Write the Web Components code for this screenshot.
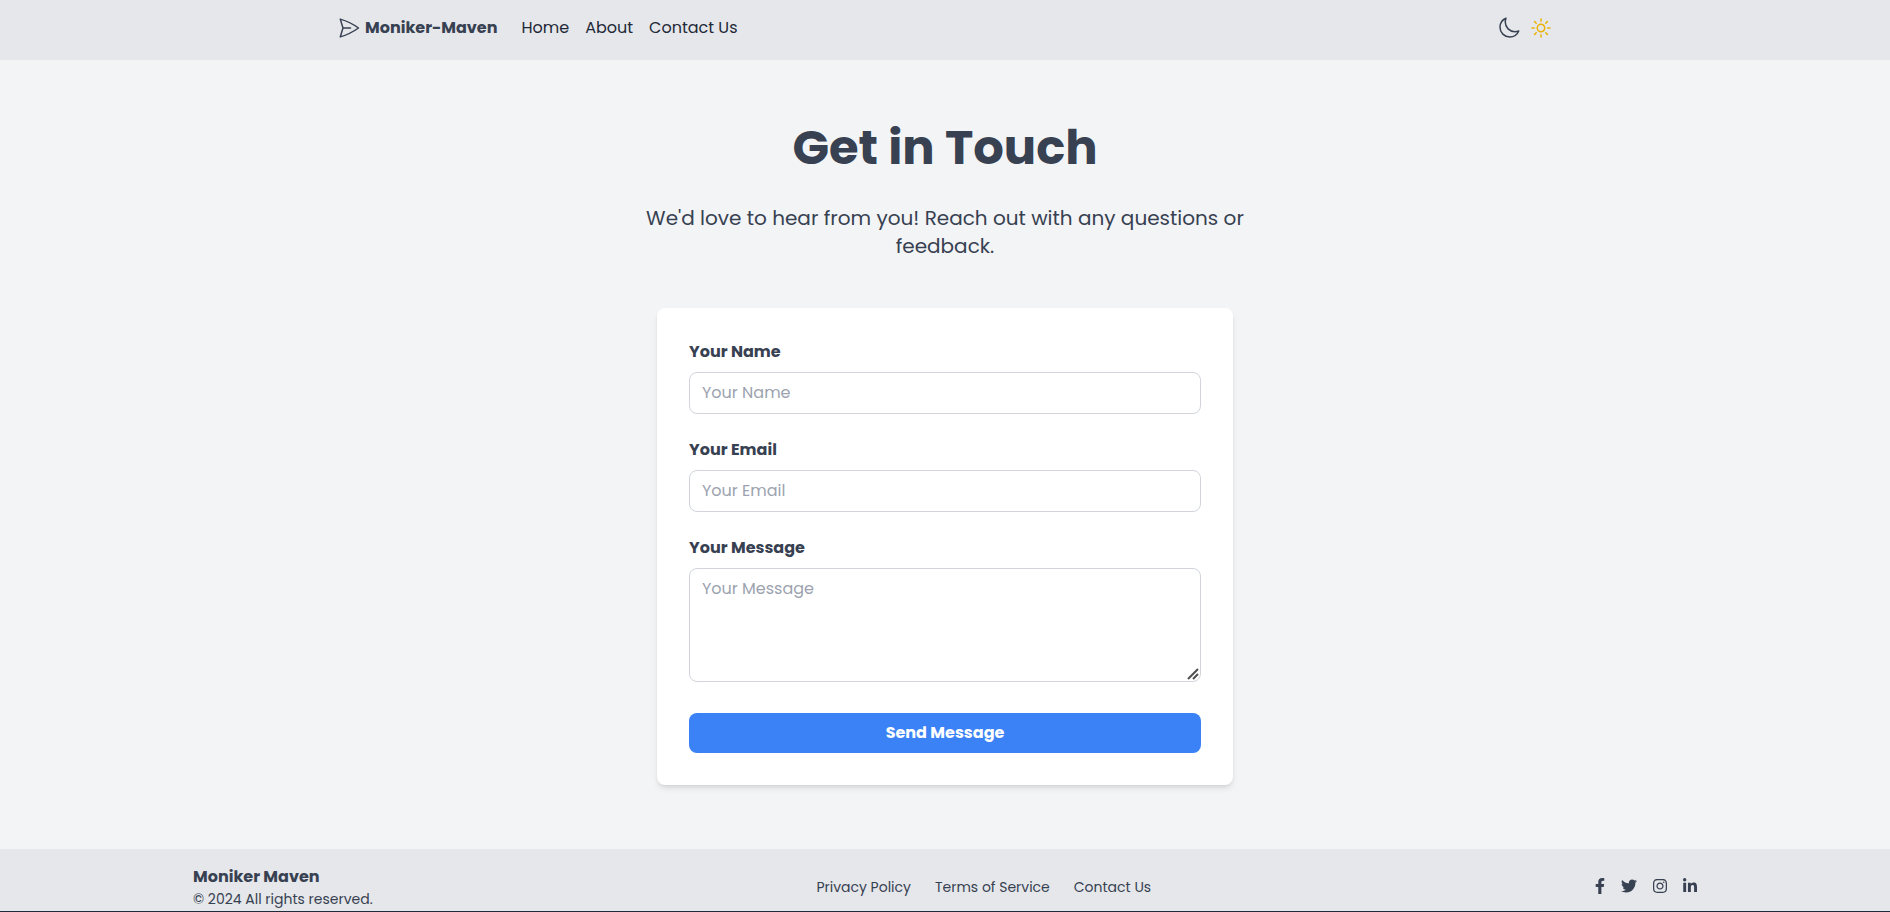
<!DOCTYPE html>
<html lang="en">
<head>
<meta charset="utf-8">
<meta name="viewport" content="width=device-width, initial-scale=1">
<title>Moniker Maven – Contact</title>
<style>
:root {
  --ink: #374151;
  --bar: #e5e7eb;
  --page: #f3f4f6;
  --line: #d1d5db;
  --accent: #3b82f6;
}
body {
  margin: 0;
  background: #1f2937;
  color: var(--ink);
  font-family: Poppins, Inter, "Open Sans", sans-serif;
  font-size: 16px;
  line-height: 24px;
}
</style>
</head>
<body>
<contact-page></contact-page>

<script>
const define = (name, html, setup) => {
  const template = document.createElement('template');
  template.innerHTML = `<style>*{box-sizing:border-box} svg{display:block}</style>${html}`;
  customElements.define(name, class extends HTMLElement {
    constructor() {
      super();
      this.attachShadow({ mode: 'open' }).append(template.content.cloneNode(true));
    }
    connectedCallback() { if (setup) setup(this, this.shadowRoot); }
  });
};

define('nav-link', `
<style>
:host { display: block; }
a { color: #1f2937; text-decoration: none; }
</style>
<a><slot></slot></a>`, (el, root) => {
  root.querySelector('a').href = el.getAttribute('href') || '#';
});

define('site-header', `
<style>
:host { display: block; background: var(--bar); }
.inner { max-width: 1280px; margin: 0 auto; padding: 16px 32px 20px; display: flex; align-items: center; justify-content: space-between; }
nav, .brand, .theme { display: flex; align-items: center; }
.brand { font-weight: 700; color: var(--ink); text-decoration: none; margin-right: 8px; gap: 4px; }
nav { gap: 16px; }
.theme { gap: 8px; }
button { display: block; border: 0; padding: 0; background: none; color: var(--ink); }
button.sun { color: #eab308; }
</style>
<header class="inner">
  <nav>
    <a class="brand" href="#">
      <svg width="24" height="24" viewBox="0 0 24 24" fill="none" stroke="currentColor" stroke-width="1.5" stroke-linecap="round" stroke-linejoin="round" aria-hidden="true"><path d="M6 12 3.269 3.125A59.769 59.769 0 0 1 21.485 12 59.768 59.768 0 0 1 3.27 20.875L5.999 12Zm0 0h7.5"/></svg>
      <span>Moniker-Maven</span>
    </a>
    <nav-link href="#home">Home</nav-link>
    <nav-link href="#about">About</nav-link>
    <nav-link href="#contact">Contact Us</nav-link>
  </nav>
  <div class="theme">
    <button type="button" aria-label="Dark mode"><svg width="24" height="24" viewBox="0 0 24 24" fill="none" stroke="currentColor" stroke-width="1.5" stroke-linecap="round" stroke-linejoin="round"><path d="M21.752 15.002A9.72 9.72 0 0 1 18 15.75c-5.385 0-9.75-4.365-9.75-9.75 0-1.33.266-2.597.748-3.752A9.753 9.753 0 0 0 3 11.25C3 16.635 7.365 21 12.75 21a9.753 9.753 0 0 0 9.002-5.998Z"/></svg></button>
    <button type="button" class="sun" aria-label="Light mode"><svg width="24" height="24" viewBox="0 0 24 24" fill="none" stroke="currentColor" stroke-width="1.5" stroke-linecap="round" stroke-linejoin="round"><path d="M12 3v2.25m6.364.386-1.591 1.591M21 12h-2.25m-.386 6.364-1.591-1.591M12 18.75V21m-4.773-4.227-1.591 1.591M5.25 12H3m4.227-4.773L5.636 5.636M15.75 12a3.75 3.75 0 1 1-7.5 0 3.75 3.75 0 0 1 7.5 0Z"/></svg></button>
  </div>
</header>`);

define('page-intro', `
<style>
:host { display: block; text-align: center; max-width: 672px; margin: 0 auto 48px; padding: 0 16px; }
h1 { margin: 0 0 32px; font-size: 48px; line-height: 48px; font-weight: 700; }
p { margin: 0; font-size: 20px; line-height: 28px; }
</style>
<h1><slot name="title"></slot></h1>
<p><slot></slot></p>`);

define('form-field', `
<style>
:host { display: block; }
label { display: block; margin-bottom: 8px; font-weight: 700; }
input, textarea { display: block; width: 100%; margin: 0; padding: 8px 12px; border: 1px solid var(--line); border-radius: 8px; background: #fff; color: var(--ink); font: inherit; }
input { height: 42px; padding: 7px 12px 9px; }
::placeholder { color: #9ca3af; opacity: 1; }
textarea::-webkit-resizer { background: url("data:image/svg+xml,%3Csvg xmlns='http://www.w3.org/2000/svg' width='15' height='15' fill='none' stroke='%23505050' stroke-width='2'%3E%3Cpath d='M3 13 13 3M8 13l5-5'/%3E%3C/svg%3E") no-repeat right bottom; }
</style>
<label for="control"></label>`, (el, root) => {
  if (root.querySelector('#control')) return;
  const text = el.getAttribute('label');
  const type = el.getAttribute('type');
  const control = document.createElement(type === 'textarea' ? 'textarea' : 'input');
  if (type === 'textarea') control.rows = 4; else control.type = type;
  control.id = 'control';
  control.placeholder = text;
  root.querySelector('label').textContent = text;
  root.append(control);
});

define('contact-form', `
<style>
:host { display: block; max-width: 576px; margin: 0 auto; }
form { display: flex; flex-direction: column; gap: 24px; padding: 32px; background: #fff; border-radius: 8px; box-shadow: 0 4px 6px -1px rgb(0 0 0 / .1), 0 2px 4px -2px rgb(0 0 0 / .1); }
button { margin-top: 7px; padding: 8px 16px; border: 0; border-radius: 8px; background: var(--accent); color: #fff; font: inherit; font-weight: 700; }
</style>
<form>
  <form-field label="Your Name" type="text"></form-field>
  <form-field label="Your Email" type="email"></form-field>
  <form-field label="Your Message" type="textarea"></form-field>
  <button type="submit">Send Message</button>
</form>`);

define('site-footer', `
<style>
:host { display: block; background: var(--bar); font-size: 14px; line-height: 20px; }
footer { max-width: 1536px; margin: 0 auto; padding: 16px 16px 2px; display: flex; align-items: center; justify-content: space-between; }
h2 { margin: 0; font-size: 16px; line-height: 24px; font-weight: 700; }
p { margin: 0; }
a { color: inherit; text-decoration: none; }
nav { display: flex; gap: 24px; }
.social { gap: 16px; padding-bottom: 2px; }
</style>
<footer>
  <div>
    <h2>Moniker Maven</h2>
    <p>© 2024 All rights reserved.</p>
  </div>
  <nav>
    <a href="#privacy">Privacy Policy</a>
    <a href="#terms">Terms of Service</a>
    <a href="#contact">Contact Us</a>
  </nav>
  <nav class="social">
    <a href="#facebook" aria-label="Facebook"><svg width="10" height="16" viewBox="0 0 320 512" fill="currentColor"><path d="M279.14 288l14.22-92.66h-88.91v-60.13c0-25.35 12.42-50.06 52.24-50.06h40.42V6.26S260.43 0 225.36 0c-73.22 0-121.08 44.38-121.08 124.72v70.62H22.89V288h81.39v224h100.17V288z"/></svg></a>
    <a href="#twitter" aria-label="Twitter"><svg width="16" height="16" viewBox="0 0 512 512" fill="currentColor"><path d="M459.37 151.716c.325 4.548.325 9.097.325 13.645 0 138.72-105.583 298.558-298.558 298.558-59.452 0-114.68-17.219-161.137-47.106 8.447.974 16.568 1.299 25.34 1.299 49.055 0 94.213-16.568 130.274-44.832-46.132-.975-84.792-31.188-98.112-72.772 6.498.974 12.995 1.624 19.818 1.624 9.421 0 18.843-1.3 27.614-3.573-48.081-9.747-84.143-51.98-84.143-102.985v-1.299c13.969 7.797 30.214 12.67 47.431 13.319-28.264-18.843-46.781-51.005-46.781-87.391 0-19.492 5.197-37.36 14.294-52.954 51.655 63.675 129.3 105.258 216.365 109.807-1.624-7.797-2.599-15.918-2.599-24.04 0-57.828 46.782-104.934 104.934-104.934 30.213 0 57.502 12.67 76.67 33.137 23.715-4.548 46.456-13.32 66.599-25.34-7.798 24.366-24.366 44.833-46.132 57.827 21.117-2.273 41.584-8.122 60.426-16.243-14.292 20.791-32.161 39.308-52.628 54.253z"/></svg></a>
    <a href="#instagram" aria-label="Instagram"><svg width="14" height="16" viewBox="0 0 448 512" fill="currentColor"><path d="M224.1 141c-63.6 0-114.9 51.3-114.9 114.9s51.3 114.9 114.9 114.9S339 319.5 339 255.900 287.700 141 224.100 141zm0 189.600c-41.100 0-74.700-33.500-74.700-74.700s33.500-74.700 74.700-74.700 74.700 33.500 74.700 74.700-33.600 74.700-74.700 74.700zm146.400-194.300c0 14.900-12 26.800-26.800 26.800-14.900 0-26.800-12-26.800-26.800s12-26.800 26.800-26.800 26.800 12 26.800 26.800zm76.100 27.200c-1.700-35.900-9.900-67.700-36.200-93.900-26.200-26.200-58-34.400-93.900-36.200-37-2.100-147.900-2.100-184.900 0-35.800 1.700-67.600 9.900-93.900 36.100s-34.400 58-36.200 93.900c-2.100 37-2.100 147.900 0 184.900 1.700 35.900 9.900 67.700 36.200 93.900s58 34.400 93.900 36.200c37 2.100 147.900 2.100 184.900 0 35.900-1.700 67.700-9.900 93.900-36.200 26.200-26.200 34.400-58 36.200-93.900 2.100-37 2.100-147.800 0-184.800zM398.800 388c-7.800 19.600-22.900 34.700-42.600 42.600-29.500 11.700-99.500 9-132.100 9s-102.700 2.600-132.100-9c-19.600-7.800-34.700-22.900-42.600-42.600-11.700-29.500-9-99.500-9-132.100s-2.600-102.700 9-132.100c7.800-19.600 22.900-34.700 42.600-42.600 29.500-11.700 99.500-9 132.100-9s102.700-2.600 132.100 9c19.600 7.800 34.700 22.900 42.600 42.600 11.700 29.500 9 99.500 9 132.100s2.700 102.700-9 132.100z"/></svg></a>
    <a href="#linkedin" aria-label="LinkedIn"><svg width="14" height="16" viewBox="0 0 448 512" fill="currentColor"><path d="M100.280 448H7.400V148.900h92.880zM53.790 108.100C24.090 108.100 0 83.500 0 53.800a53.790 53.790 0 0 1 107.580 0c0 29.700-24.100 54.300-53.790 54.300zM447.900 448h-92.680V302.400c0-34.700-.7-79.200-48.290-79.200-48.290 0-55.690 37.700-55.690 76.700V448h-92.780V148.900h89.080v40.800h1.300c12.400-23.500 42.690-48.300 87.880-48.300 94 0 111.280 61.900 111.280 142.300V448z"/></svg></a>
  </nav>
</footer>`);

define('contact-page', `
<style>
:host { display: block; }
main { padding: 64px 16px; background: var(--page); }
</style>
<site-header></site-header>
<main>
  <page-intro><span slot="title">Get in Touch</span>We'd love to hear from you! Reach out with any questions or feedback.</page-intro>
  <contact-form></contact-form>
</main>
<site-footer></site-footer>`);
</script>
</body>
</html>
